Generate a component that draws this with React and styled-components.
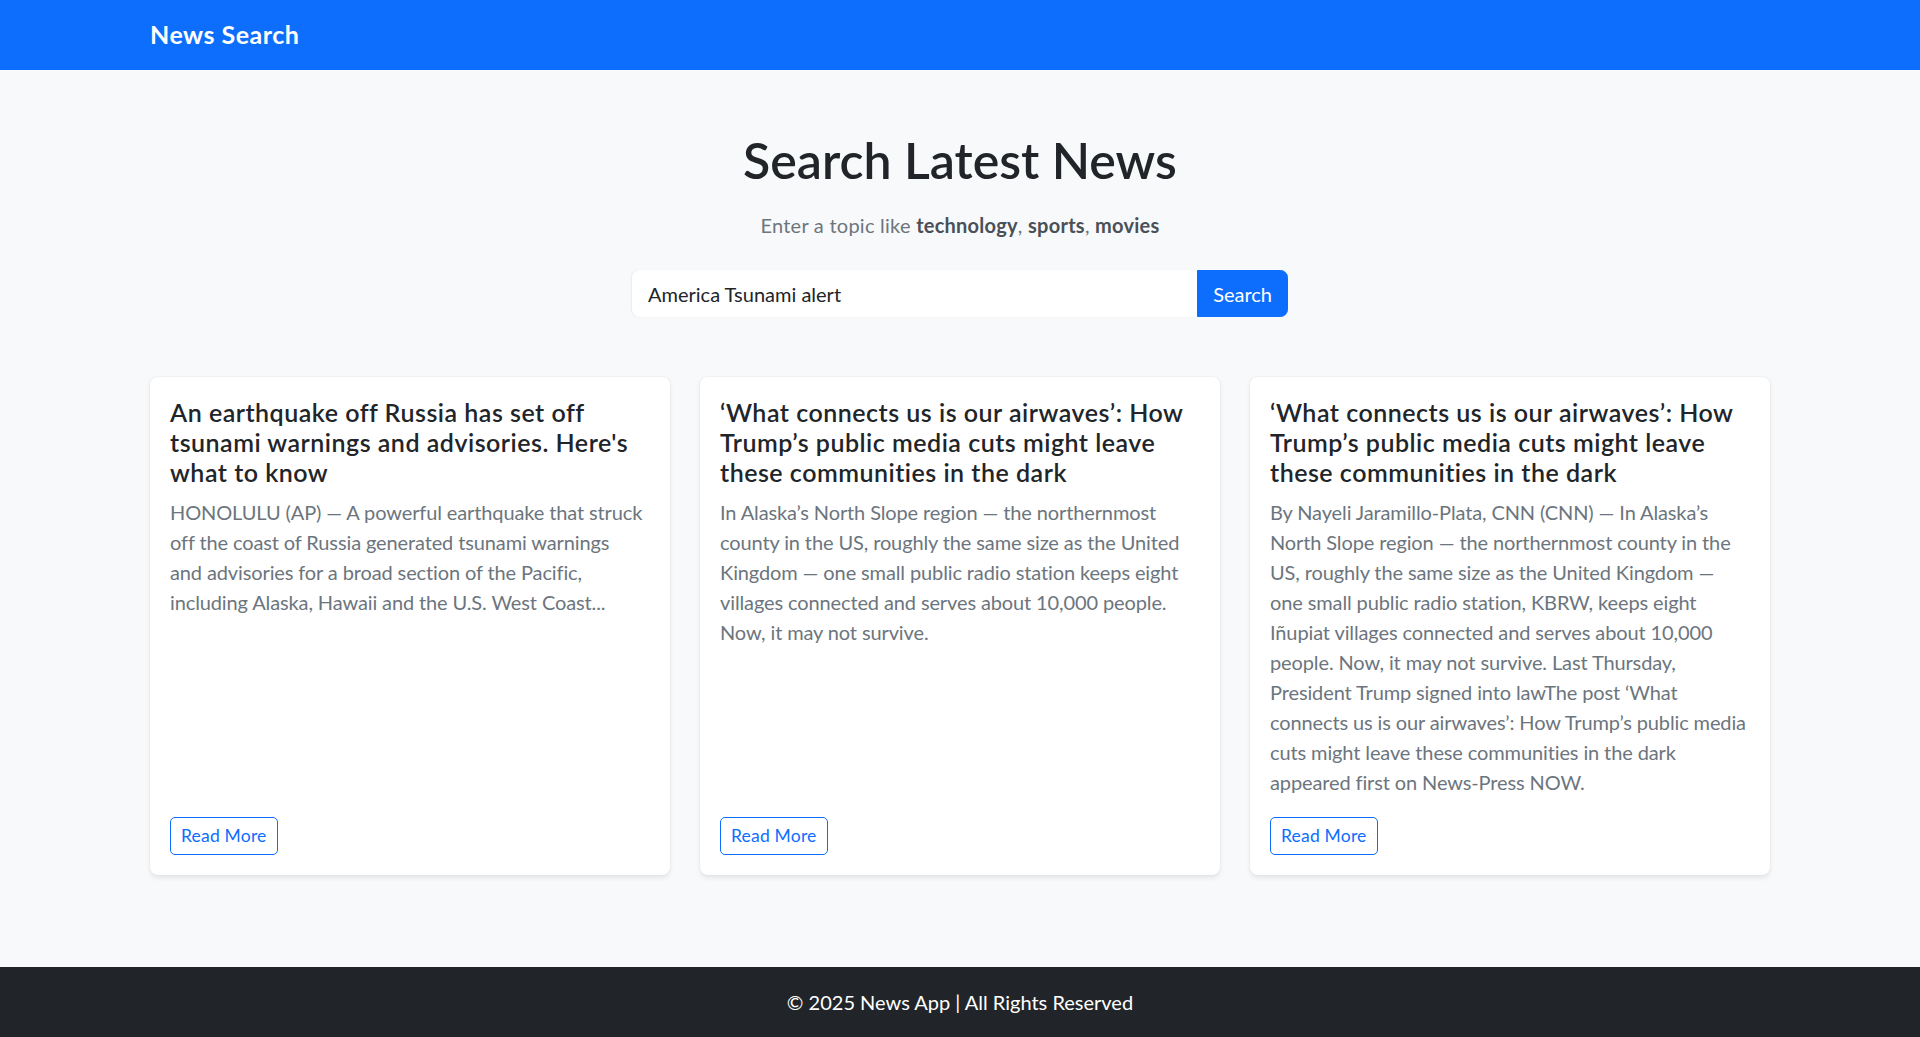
import React from "react";
import styled, { createGlobalStyle } from "styled-components";

const FONT = `"Lato", "Open Sans", "Noto Sans", sans-serif`;

const GlobalStyle = createGlobalStyle`
  html, body { margin: 0; padding: 0; }
  body {
    background: #f8f9fa;
    font-family: ${FONT};
    color: #212529;
    -webkit-font-smoothing: antialiased;
  }
  * { box-sizing: border-box; }
`;

const Page = styled.div`
  min-height: 100vh;
  display: flex;
  flex-direction: column;
`;

const Container = styled.div`
  width: 100%;
  max-width: 1650px;
  padding: 0 15px;
  margin: 0 auto;
`;

const Navbar = styled.nav`
  background: #0d6efd;
  padding: 10px 0;
`;

const Brand = styled.a`
  display: inline-block;
  padding: 6.25px 0;
  font-size: 25px;
  line-height: 37.5px;
  font-weight: 700;
  letter-spacing: 0.5px;
  color: #fff;
  text-decoration: none;
`;

const Main = styled(Container)`
  margin-top: 60px;
  margin-bottom: 60px;
`;

const Hero = styled.header`
  text-align: center;
`;

const Title = styled.h1`
  margin: 0 0 20px;
  font-size: 50px;
  line-height: 60px;
  font-weight: 600;
  color: #212529;
`;

const Lead = styled.p`
  margin: 0 0 30px;
  font-size: 20px;
  line-height: 30px;
  letter-spacing: 0.25px;
  color: #6c757d;
  strong {
    color: #495057;
    font-weight: 700;
  }
`;

const SearchForm = styled.form`
  display: flex;
  width: 656px;
  margin: 0 auto 60px;
`;

const SearchInput = styled.input`
  flex: 1;
  min-width: 0;
  font-family: ${FONT};
  font-size: 20px;
  line-height: 30px;
  padding: 7.5px 15px;
  color: #212529;
  background: #fff;
  border: 1.25px solid #fff;
  border-radius: 7.5px 0 0 7.5px;
  box-shadow: -1px 0 2px rgba(0, 0, 0, 0.06);
  outline: none;
`;

const SearchButton = styled.button`
  font-family: ${FONT};
  font-size: 20px;
  line-height: 30px;
  padding: 7.5px 15px;
  color: #fff;
  background: #0d6efd;
  border: 1.25px solid #0d6efd;
  border-radius: 0 7.5px 7.5px 0;
  cursor: pointer;
`;

const CardGrid = styled.div`
  display: grid;
  grid-template-columns: repeat(3, 1fr);
  gap: 30px;
`;

const Card = styled.article`
  background: #fff;
  border-radius: 7.5px;
  box-shadow: 0 2.5px 5px rgba(0, 0, 0, 0.08), 0 0 1.5px rgba(0, 0, 0, 0.1);
  padding: 20px;
  display: flex;
  flex-direction: column;
`;

const CardTitle = styled.h5`
  margin: 0 0 10px;
  font-size: 25px;
  line-height: 30px;
  font-weight: 600;
  letter-spacing: 0.5px;
  color: #212529;
`;

const CardText = styled.p`
  margin: 0 0 20px;
  font-size: 20px;
  line-height: 30px;
  letter-spacing: -0.12px;
  color: #6c757d;
`;

const ReadMore = styled.a`
  margin-top: auto;
  align-self: flex-start;
  display: inline-block;
  padding: 5px 10px;
  font-size: 17.5px;
  line-height: 26.25px;
  letter-spacing: 0.2px;
  color: #0d6efd;
  border: 1.25px solid #0d6efd;
  border-radius: 5px;
  text-decoration: none;
`;

const Footer = styled.footer`
  margin-top: auto;
  background: #212529;
  color: #fff;
  text-align: center;
  padding: 20px 0;
  font-size: 20px;
  line-height: 30px;
`;

const articles = [
  {
    title:
      "An earthquake off Russia has set off tsunami warnings and advisories. Here's what to know",
    text:
      "HONOLULU (AP) — A powerful earthquake that struck off the coast of Russia generated tsunami warnings and\u00a0advisories for a broad section of the Pacific, including Alaska, Hawaii and the U.S. West Coast...",
  },
  {
    title:
      "‘What connects us is our airwaves’: How Trump’s public media cuts might leave these communities in the dark",
    text:
      "In Alaska’s North Slope region — the northernmost county in the US, roughly the same size as the United Kingdom — one small public radio station keeps eight villages connected and serves about 10,000 people. Now, it may not survive.",
  },
  {
    title:
      "‘What connects us is our airwaves’: How Trump’s public media cuts might leave these communities in the dark",
    text:
      "By Nayeli Jaramillo-Plata, CNN (CNN) — In Alaska’s North Slope region — the northernmost county in the US, roughly the same size as the United Kingdom — one small public radio station, KBRW, keeps eight Iñupiat villages connected and serves about 10,000 people. Now, it may not survive. Last Thursday, President Trump signed into lawThe post ‘What connects us is our airwaves’: How Trump’s public media cuts might leave these communities in the dark appeared first on News-Press NOW.",
  },
];

export default function App() {
  return (
    <>
      <GlobalStyle />
      <Page>
        <Navbar>
          <Container>
            <Brand href="#">News Search</Brand>
          </Container>
        </Navbar>
        <Main>
          <Hero>
            <Title>Search Latest News</Title>
            <Lead>
              Enter a topic like <strong>technology</strong>,{" "}
              <strong>sports</strong>, <strong>movies</strong>
            </Lead>
          </Hero>
          <SearchForm onSubmit={(e) => e.preventDefault()}>
            <SearchInput defaultValue="America Tsunami alert" />
            <SearchButton type="submit">Search</SearchButton>
          </SearchForm>
          <CardGrid>
            {articles.map((a, i) => (
              <Card key={i}>
                <CardTitle>{a.title}</CardTitle>
                <CardText>{a.text}</CardText>
                <ReadMore href="#">Read More</ReadMore>
              </Card>
            ))}
          </CardGrid>
        </Main>
        <Footer>© 2025 News App | All Rights Reserved</Footer>
      </Page>
    </>
  );
}
